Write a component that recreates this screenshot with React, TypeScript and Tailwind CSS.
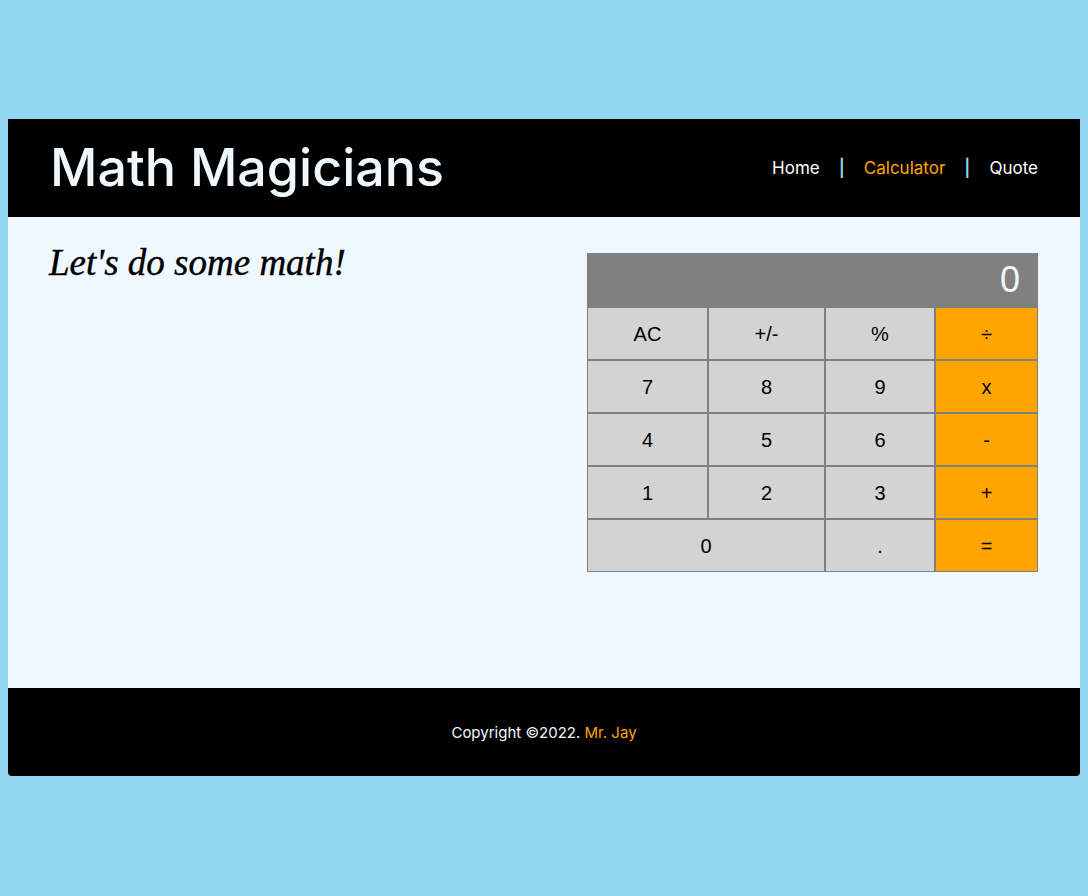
const keys: { label: string; op?: boolean; wide?: boolean }[] = [
  { label: "AC" },
  { label: "+/-" },
  { label: "%" },
  { label: "÷", op: true },
  { label: "7" },
  { label: "8" },
  { label: "9" },
  { label: "x", op: true },
  { label: "4" },
  { label: "5" },
  { label: "6" },
  { label: "-", op: true },
  { label: "1" },
  { label: "2" },
  { label: "3" },
  { label: "+", op: true },
  { label: "0", wide: true },
  { label: "." },
  { label: "=", op: true },
];

const Calculator = () => (
  <div className="w-[451px] font-['Liberation_Sans',Arial,sans-serif]">
    <div className="flex h-[54px] items-center justify-end bg-[#808080] pr-[18px] text-[36px] text-[#f0f8ff]">
      0
    </div>
    <div className="grid grid-cols-[121px_117px_110px_103px]">
      {keys.map((k) => (
        <button
          key={k.label}
          className={`flex h-[53px] items-center justify-center border border-[#808080] text-[20px] text-black ${
            k.op ? "bg-[#ffa500]" : "bg-[#d3d3d3]"
          } ${k.wide ? "col-span-2" : ""}`}
        >
          {k.label}
        </button>
      ))}
    </div>
  </div>
);

export default function App() {
  return (
    <div className="min-h-[896px] bg-[#93d5f0] pt-[119px]">
      <div className="mx-2 overflow-hidden rounded-b-[4px] font-['Inter',sans-serif]">
        <header className="flex h-[98px] items-center justify-between bg-black px-[42px]">
          <h1 className="text-[52px] font-medium text-[#f0f8ff]">Math Magicians</h1>
          <nav className="flex items-center gap-[19px] pt-[2px] text-[17px] text-white">
            <a>Home</a>
            <span className="font-semibold text-[#93d5f0]">|</span>
            <a className="text-[#ffa500]">Calculator</a>
            <span className="font-semibold text-[#93d5f0]">|</span>
            <a>Quote</a>
          </nav>
        </header>
        <main className="flex h-[471px] justify-between bg-[#f0f8ff] px-[41px] pt-[18px]">
          <h2 className="font-['Liberation_Serif',serif] text-[37px] italic text-black [-webkit-text-stroke:0.4px_black]">
            Let's do some math!
          </h2>
          <div className="pt-[18px] pr-px">
            <Calculator />
          </div>
        </main>
        <footer className="flex h-[88px] items-center justify-center bg-black pt-[2px] text-[15px] text-[#f0f8ff]">
          Copyright ©2022.&nbsp;<span className="text-[#ffa500]">Mr. Jay</span>
        </footer>
      </div>
    </div>
  );
}
